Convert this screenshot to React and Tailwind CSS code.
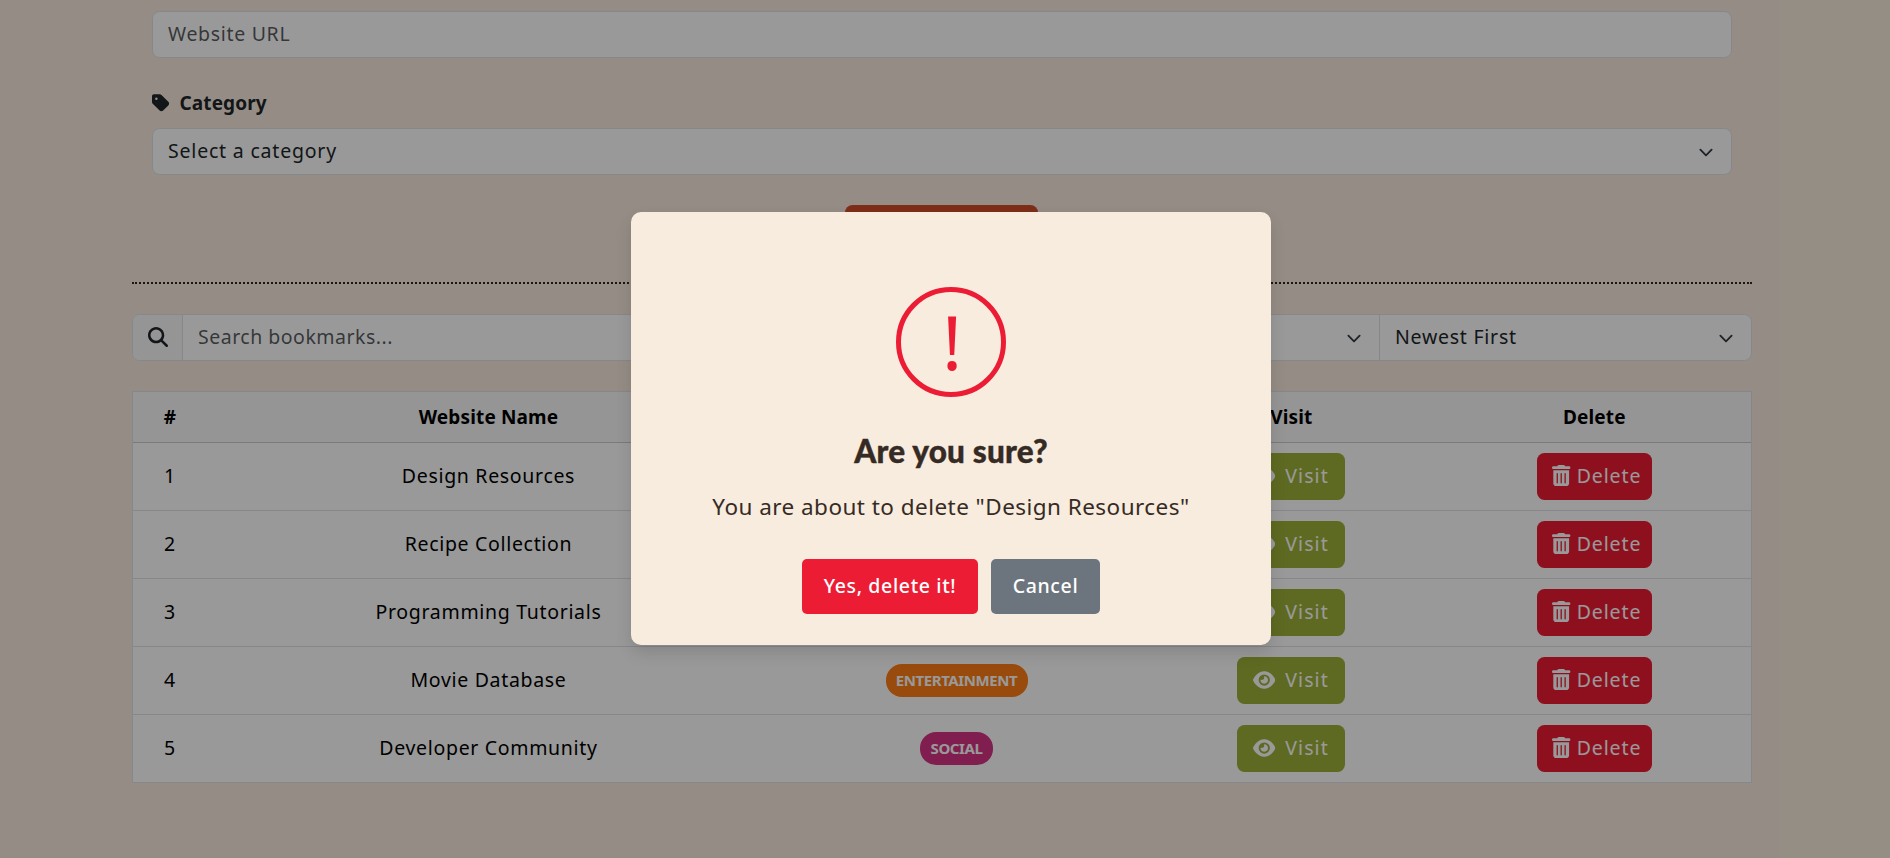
import React from "react";

const rows = [
  { name: "Design Resources" },
  { name: "Recipe Collection" },
  { name: "Programming Tutorials" },
  { name: "Movie Database", tag: "ENTERTAINMENT", tagClass: "w-[142px] bg-[#fd7e14]" },
  { name: "Developer Community", tag: "SOCIAL", tagClass: "w-[73px] bg-[#d63384]" },
];

const grid = "grid grid-cols-[74px_563px_375px_292.5px_1fr] text-center";

function Chevron() {
  return (
    <svg viewBox="0 0 16 16" className="mt-[2px] h-[15px] w-5 shrink-0" fill="none" stroke="#343a40" strokeWidth="2" strokeLinecap="round" strokeLinejoin="round">
      <path d="m2 5 6 6 6-6" />
    </svg>
  );
}

function TagIcon() {
  return (
    <svg viewBox="0 0 448 512" className="h-5 w-[17.5px]" fill="currentColor">
      <path d="M0 80V229.500c0 17 6.700 33.300 18.700 45.300l176 176c25 25 65.500 25 90.500 0L418.700 317.300c25-25 25-65.500 0-90.500l-176-176c-12-12-28.300-18.700-45.300-18.700H48C21.500 32 0 53.500 0 80zm112 32a32 32 0 1 1 0 64 32 32 0 1 1 0-64z" />
    </svg>
  );
}

function SearchIcon() {
  return (
    <svg viewBox="0 0 512 512" className="size-5" fill="currentColor">
      <path d="M416 208c0 45.900-14.900 88.300-40 122.700L502.600 457.400c12.500 12.500 12.500 32.800 0 45.300s-32.800 12.500-45.300 0L330.700 376c-34.400 25.200-76.800 40-122.700 40C93.100 416 0 322.900 0 208S93.100 0 208 0S416 93.100 416 208zM208 352a144 144 0 1 0 0-288 144 144 0 1 0 0 288z" />
    </svg>
  );
}

function EyeIcon() {
  return (
    <svg viewBox="0 0 576 512" className="h-5 w-[22.5px]" fill="currentColor">
      <path d="M288 32c-80.800 0-145.500 36.800-192.600 80.600C48.600 156 17.300 208 2.500 243.700c-3.300 7.900-3.300 16.700 0 24.600C17.300 304 48.600 356 95.400 399.400C142.500 443.200 207.200 480 288 480s145.500-36.800 192.600-80.600c46.800-43.500 78.100-95.400 93-131.100c3.300-7.900 3.300-16.700 0-24.600c-14.900-35.700-46.200-87.700-93-131.100C433.500 68.800 368.800 32 288 32zM144 256a144 144 0 1 1 288 0 144 144 0 1 1 -288 0zm144-64c0 35.300-28.700 64-64 64c-7.100 0-13.900-1.200-20.300-3.300c-5.500-1.800-11.900 1.600-11.700 7.400c.3 6.900 1.300 13.800 3.200 20.700c13.700 51.200 66.400 81.600 117.600 67.900s81.600-66.400 67.900-117.600c-11.100-41.500-47.800-69.400-88.600-71.100c-5.800-.2-9.200 6.100-7.400 11.700c2.100 6.400 3.300 13.200 3.300 20.300z" />
    </svg>
  );
}

function TrashIcon() {
  return (
    <svg viewBox="0 0 448 512" className="h-[21px] w-[18.400px]" fill="currentColor">
      <path d="M135.200 17.700C140.600 6.800 151.700 0 163.800 0H284.200c12.100 0 23.200 6.800 28.600 17.700L320 32h96c17.700 0 32 14.300 32 32s-14.300 32-32 32H32C14.300 96 0 81.700 0 64S14.300 32 32 32h96l7.200-14.300zM32 128H416V448c0 35.300-28.700 64-64 64H96c-35.300 0-64-28.700-64-64V128zm96 64c-8.800 0-16 7.200-16 16V432c0 8.800 7.200 16 16 16s16-7.200 16-16V208c0-8.800-7.200-16-16-16zm96 0c-8.800 0-16 7.200-16 16V432c0 8.800 7.200 16 16 16s16-7.200 16-16V208c0-8.800-7.200-16-16-16zm96 0c-8.800 0-16 7.200-16 16V432c0 8.800 7.200 16 16 16s16-7.200 16-16V208c0-8.800-7.200-16-16-16z" />
    </svg>
  );
}

function BookmarkTable() {
  return (
    <div className="mt-[30px] border border-[#dee2e6] bg-white text-black">
      <div className={grid + " h-[51px] items-center border-b border-[#cbcccd] bg-[#f8f9fa] text-[19px] font-bold tracking-[0.15px]"}>
        <div>#</div>
        <div>Website Name</div>
        <div>Category</div>
        <div>Visit</div>
        <div>Delete</div>
      </div>
      {rows.map((row, i) => (
        <div key={row.name} className={grid + " h-[68px] items-center border-b border-[#dee2e6] last:h-[67px] last:border-b-0"}>
          <div className="pb-[1px]">{i + 1}</div>
          <div className="pb-[1px]">{row.name}</div>
          <div className="flex justify-center pr-[2px]">
            {row.tag && (
              <span className={"flex h-[33px] items-center justify-center rounded-[16px] pb-[2px] text-[15px] font-bold tracking-[-0.4px] text-white " + row.tagClass}>
                {row.tag}
              </span>
            )}
          </div>
          <div className="flex justify-center">
            <button className="flex h-[47px] w-[108px] items-center rounded-[7.500px] bg-[#9db137] pb-[2px] pl-[15.500px] tracking-[1.1px] text-white">
              <EyeIcon />
              <span className="ml-[10px]">Visit</span>
            </button>
          </div>
          <div className="flex justify-center">
            <button className="flex h-[47px] w-[115px] items-center rounded-[7.500px] bg-[#ed1c35] pb-[2px] pl-[15.500px] tracking-[0.9px] text-white">
              <TrashIcon />
              <span className="ml-[6px]">Delete</span>
            </button>
          </div>
        </div>
      ))}
    </div>
  );
}

function ConfirmDialog() {
  return (
    <div className="absolute inset-0 bg-black/40">
      <div role="dialog" className="mt-[212px] ml-[631px] flex h-[433px] w-[640px] flex-col items-center rounded-[10px] bg-[#f8ecde] pt-[75px] text-[#362b24] shadow-[0_8px_16px_rgba(0,0,0,0.12)]">
        <div className="flex size-[110px] items-center justify-center rounded-full border-[5px] border-[#ed1c35] pb-[2px] pl-[2px] text-[75px] leading-none tracking-normal text-[#ed1c35]">
          !
        </div>
        <h2 className="mt-[32px] font-['Lato'] text-[31.5px] leading-[44px] font-black tracking-[0.2px] [-webkit-text-stroke:0.4px_#362b24]">Are you sure?</h2>
        <p className="mt-[17px] text-[22.5px] leading-[34px] tracking-[0.46px]">You are about to delete "Design Resources"</p>
        <div className="mt-[35px] flex gap-[13px] font-medium text-white">
          <button className="h-[55px] w-[176px] rounded-[5px] bg-[#ed1c35] pb-[2px] tracking-[0.64px]">Yes, delete it!</button>
          <button className="h-[55px] w-[109px] rounded-[5px] bg-[#6c757d] pb-[2px] tracking-[0.64px]">Cancel</button>
        </div>
      </div>
    </div>
  );
}

export default function App() {
  return (
    <div className="relative h-[858px] w-full overflow-hidden bg-[#f8ecde] font-['Noto_Sans',sans-serif] text-[19.5px] leading-[30px] tracking-[0.68px] text-[#212529]">
      <main className="ml-[132px] w-[1620px] pt-[11px]">
        <form className="px-5">
          <div className="flex h-[47px] items-center rounded-[7.500px] border border-[#dee2e6] bg-white px-[15px] pb-[1px] text-[#212529]/75">
            <span>Website URL</span>
          </div>
          <label className="mt-[30px] flex h-[30px] items-center gap-[10px] text-[19px] font-bold tracking-[0.1px]">
            <TagIcon />
            <span>Category</span>
          </label>
          <div className="mt-[10px] flex h-[47px] items-center justify-between rounded-[7.500px] border border-[#dee2e6] bg-white px-[15px] pb-[1px]">
            <span className="tracking-[0.8px]">Select a category</span>
            <Chevron />
          </div>
          <div className="mt-[30px] ml-[693px] h-[47px] w-[193px] rounded-[7.500px] bg-[#d24d28]" />
        </form>
        <hr className="mt-[30px] border-t-2 border-dotted border-[#2a2720]" />
        <div className="mt-[30px] flex h-[47px] rounded-[7.500px] border border-[#dee2e6] bg-white">
          <div className="flex w-[50px] items-center rounded-l-[7px] border-r border-[#dee2e6] bg-[#f8f9fa] pb-[1px] pl-[15px]">
            <SearchIcon />
          </div>
          <div className="flex w-[822px] items-center border-r border-[#dee2e6] pb-[1px] pl-[15px] tracking-[0.5px] text-[#212529]/75">
            <span>Search bookmarks...</span>
          </div>
          <div className="flex flex-1 items-center justify-end border-r border-[#dee2e6] pr-[15px] pb-[1px]">
            <Chevron />
          </div>
          <div className="flex w-[371px] items-center justify-between px-[15px] pb-[1px]">
            <span className="tracking-[0.75px]">Newest First</span>
            <Chevron />
          </div>
        </div>
        <BookmarkTable />
      </main>
      <ConfirmDialog />
    </div>
  );
}
